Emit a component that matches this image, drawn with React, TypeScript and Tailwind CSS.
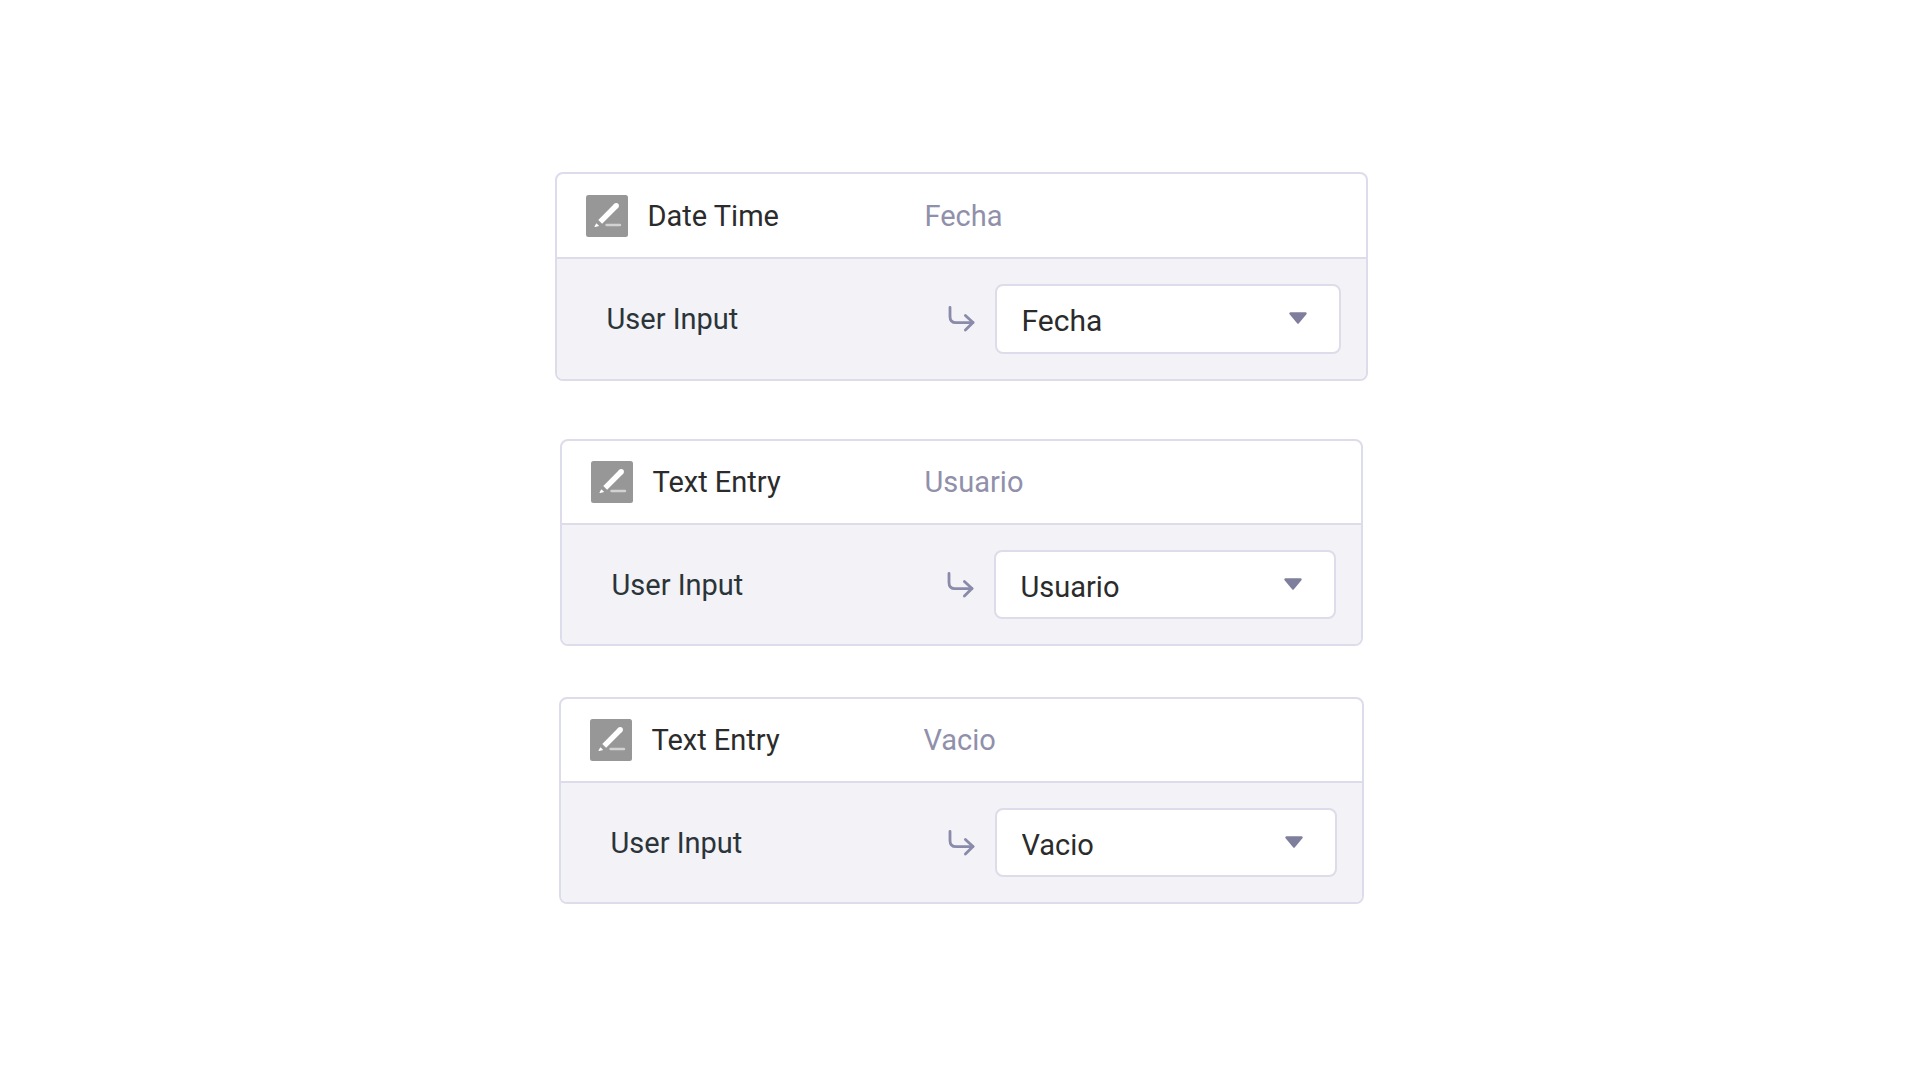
import { useState } from "react"
import clsx from "clsx"

interface Field {
  id: string;
  type: string;
  name: string;
  card: string;
  header: string;
  title: string;
  select: string;
}

const options = ["Fecha", "Usuario", "Vacio"]

const fields: Field[] = [
  { id: "fecha", type: "Date Time", name: "Fecha", card: "max-w-[813px] h-[209px]", header: "h-[83px]", title: "w-[297px]", select: "w-[346px] h-[70px] text-[30px]" },
  { id: "usuario", type: "Text Entry", name: "Usuario", card: "mt-[58px] max-w-[803px] h-[207px]", header: "h-[82px]", title: "w-[292px]", select: "w-[342px] h-[69px]" },
  { id: "vacio", type: "Text Entry", name: "Vacio", card: "mt-[51px] max-w-[805px] h-[207px]", header: "h-[82px]", title: "w-[292px]", select: "w-[342px] h-[69px]" },
]

function PencilIcon() {
  return (
    <svg viewBox="0 0 42 42" className="size-[42px] shrink-0" aria-hidden="true">
      <rect width="42" height="42" rx="2.5" fill="#979797" />
      <path d="M14.2 26.8 30 11" stroke="#fff" strokeWidth="5.4" />
      <circle cx="30.2" cy="10.8" r="2.7" fill="#fff" />
      <path d="M10.4 28.2 13.2 31 9.2 32 Q8.2 32.2 8.6 31.2Z" fill="#fff" />
      <path d="M20.5 30H34" stroke="#d2d2d2" strokeWidth="2.4" strokeLinecap="round" />
    </svg>
  )
}

function ArrowIcon() {
  return (
    <svg viewBox="0 0 28 28" className="size-7 shrink-0" fill="none" stroke="#8a8aaa" strokeWidth="2.8" strokeLinecap="round" strokeLinejoin="round" aria-hidden="true">
      <path d="M3 2.4V11.4Q3 17.6 9.1 17.6H26" />
      <path d="M18.4 10.4 26 17.6 18.4 25" />
    </svg>
  )
}

function FieldCard({ field }: { field: Field }) {
  const [value, setValue] = useState(field.name)

  return (
    <section className={clsx("flex w-full flex-col overflow-hidden rounded-lg border-2 border-[#dddcea] bg-white", field.card)}>
      <header className={clsx("flex shrink-0 items-center pl-[29px]", field.header)}>
        <PencilIcon />
        <h2 className={clsx("pl-5 text-[#2b2b2b]", field.title)}>{field.type}</h2>
        <span className="text-[#9090ab]">{field.name}</span>
      </header>

      <div className="flex flex-1 items-center border-t-2 border-[#dddcea] bg-[#f3f2f7] pr-[25px] pl-[50px]">
        <label htmlFor={field.id} className="flex-1 text-[#2b3539]">User Input</label>
        <ArrowIcon />
        <div className="relative ml-5">
          <select
            id={field.id}
            value={value}
            onChange={(e) => setValue(e.target.value)}
            className={clsx("block appearance-none rounded-lg border-2 border-[#dddcea] bg-white pt-1 pl-[25px] text-[#2b2b2b]", field.select)}
          >
            {options.map((option) => (
              <option key={option}>{option}</option>
            ))}
          </select>
          <svg viewBox="0 0 20 13" className="pointer-events-none absolute top-7 right-[33px] h-[13px] w-5" aria-hidden="true">
            <path d="M2.5 1.5H17.5L10 10.5Z" fill="#7f7f9d" stroke="#7f7f9d" strokeWidth="2.4" strokeLinejoin="round" />
          </svg>
        </div>
      </div>
    </section>
  )
}

export default function App() {
  return (
    <main className="flex min-h-screen flex-col items-center bg-white pt-[172px] pl-0.5 font-['Roboto',sans-serif] text-[29px] leading-9">
      {fields.map((field) => (
        <FieldCard key={field.id} field={field} />
      ))}
    </main>
  )
}
